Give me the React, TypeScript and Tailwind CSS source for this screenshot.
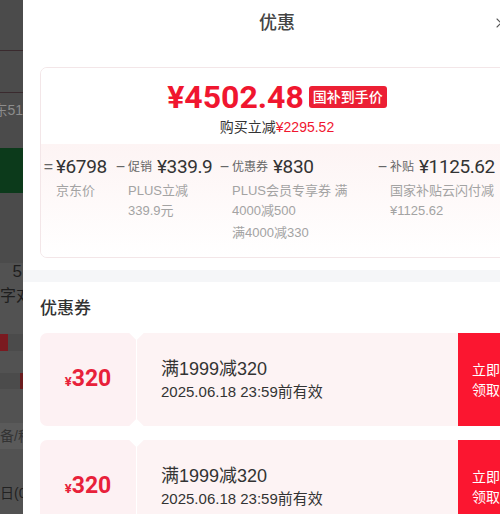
import React from "react";
import { X } from "lucide-react";

const RED = "text-[#f0162f]";

type Part = {
  sign: string;
  label?: string;
  value: string;
  width: string;
  lines: string[][];
};

const parts: Part[] = [
  { sign: "=", value: "¥6798", width: "w-[72px]", lines: [["京东价"]] },
  { sign: "−", label: "促销", value: "¥339.9", width: "w-[104px]", lines: [["PLUS立减", "339.9元"]] },
  {
    sign: "−",
    label: "优惠券",
    value: "¥830",
    width: "w-[158px]",
    lines: [["PLUS会员专享券 满", "4000减500"], ["满4000减330"]],
  },
  { sign: "−", label: "补贴", value: "¥1125.62", width: "w-[130px]", lines: [["国家补贴云闪付减", "¥1125.62"]] },
];

function BackdropStrip() {
  return (
    <div className="flex w-[23px] shrink-0 flex-col overflow-hidden bg-[#4b4b4b] text-[15px] leading-none whitespace-nowrap">
      <div className="h-[50px]" />
      <div className="h-px bg-[#3a2a2e]" />
      <div className="h-[41px]" />
      <div className="h-px bg-[#3a2a2e]" />
      <div className="flex h-[55px] justify-end pt-[10px] text-[14px] text-[#8d8d8d]">东51</div>
      <div className="h-[45px] bg-[#0c3a1b]" />
      <div className="h-[70px]" />
      <div className="flex h-[20px] justify-end bg-[#525252] pr-px text-[17px] text-[#1e1e1e]">5</div>
      <div className="flex h-[26px] items-center bg-[#525252] text-[16px] text-[#1e1e1e]">字对</div>
      <div className="h-[25px] bg-[#525252]" />
      <div className="h-[17px] w-[8px] bg-[#7a1a20]" />
      <div className="h-[22px] bg-[#525252]" />
      <div className="ml-auto h-[16px] w-[3px] bg-[#6a1d1f]" />
      <div className="h-[34px] bg-[#525252]" />
      <div className="flex h-[26px] items-center bg-[#5a5a5a] text-[14px] text-[#333]">备/移</div>
      <div className="h-[32px] bg-[#525252]" />
      <div className="flex h-[24px] items-center bg-[#525252] text-[14px] text-[#222]">日(0</div>
      <div className="flex-1 bg-[#525252]" />
    </div>
  );
}

function PriceCard() {
  return (
    <div className="overflow-hidden rounded-[7px] border border-[#f3e6e8]">
      <div className="flex flex-col items-center bg-white pt-[11px] pb-[7px]">
        <div className="flex items-center gap-[5px]">
          <span className={`font-['Roboto',sans-serif] text-[32px] leading-[36px] font-bold ${RED}`}>¥4502.48</span>
          <span className="rounded-[3px] bg-[#ec1f34] px-[4px] text-[14px] leading-[22px] font-medium text-white">国补到手价</span>
        </div>
        <div className="mt-[2px] text-[14px] leading-[20px] text-[#333]">
          购买立减<span className={RED}>¥2295.52</span>
        </div>
      </div>
      <div className="flex bg-gradient-to-b from-[#fdf4f4] to-white pt-[9px] pb-[14px]">
        {parts.map((p) => (
          <div key={p.value} className={`${p.width} shrink-0`}>
            <div className="flex h-[28px] items-center whitespace-nowrap">
              <span className="w-[15px] text-center text-[16px] text-[#666]">{p.sign}</span>
              {p.label && <span className="mr-[5px] text-[12px] text-[#666]">{p.label}</span>}
              <span className="font-['Roboto',sans-serif] text-[19px] font-normal tracking-[-0.4px] text-[#333]">
                {p.value}
              </span>
            </div>
            <div className="pl-[15px] text-[13px] leading-[20px] text-[#a3a3a3]">
              {p.lines.map((group, i) => (
                <div key={i} className={i > 0 ? "mt-[2px]" : ""}>
                  {group.map((l) => (
                    <div key={l} className="whitespace-nowrap">
                      {l}
                    </div>
                  ))}
                </div>
              ))}
            </div>
          </div>
        ))}
      </div>
    </div>
  );
}

function Coupon() {
  return (
    <div className="flex h-[93px] overflow-hidden rounded-[7px]">
      <div className="relative flex w-[97px] shrink-0 items-center justify-center border-r border-white bg-[#fdf1f3]">
        <span className="font-['Roboto',sans-serif] font-bold text-[#e8213a]">
          <span className="text-[13px]">¥</span>
          <span className="text-[23px]">320</span>
        </span>
        <span className="absolute -top-[6px] -right-[6px] h-[11px] w-[11px] rotate-45 bg-white" />
        <span className="absolute -right-[6px] -bottom-[6px] h-[11px] w-[11px] rotate-45 bg-white" />
      </div>
      <div className="flex flex-1 flex-col justify-center bg-[#fdf3f4] pl-[24px] text-[#333]">
        <div className="text-[18px] leading-[24px]">满1999减320</div>
        <div className="text-[15px] leading-[22px]">2025.06.18 23:59前有效</div>
      </div>
      <div className="flex w-[56px] shrink-0 items-center justify-center bg-[#fb1630] text-[14px] leading-[20px] text-white">
        <div>
          立即
          <br />
          领取
        </div>
      </div>
    </div>
  );
}

export default function App() {
  return (
    <div className="flex h-[514px] w-[500px] overflow-hidden font-['Liberation_Sans','Noto_Sans_CJK_SC',sans-serif]">
      <BackdropStrip />
      <div className="w-[508px] shrink-0 bg-white">
        <div className="relative flex h-[46px] items-center justify-center">
          <span className="text-[18px] font-medium text-[#444]">优惠</span>
          <X className="absolute top-[15px] right-[22px] h-[16px] w-[16px] text-[#555]" strokeWidth={1.6} />
        </div>
        <div className="px-[17px] pt-[21px]">
          <PriceCard />
        </div>
        <div className="mt-[12px] h-[12px] bg-[#f5f6f8]" />
        <div className="px-[17px] pt-[15px]">
          <div className="text-[17px] leading-[24px] font-medium text-[#333]">优惠券</div>
          <div className="mt-[12px] flex flex-col gap-[14px]">
            <Coupon />
            <Coupon />
          </div>
        </div>
      </div>
    </div>
  );
}
